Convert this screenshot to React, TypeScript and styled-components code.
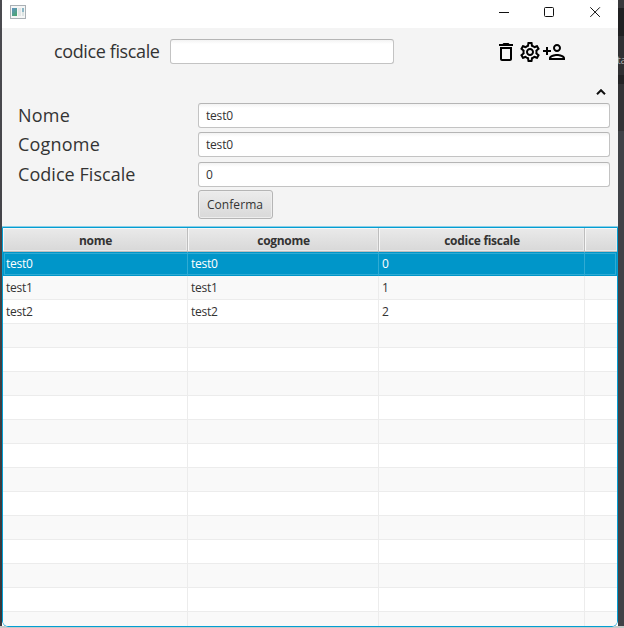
import React from "react";
import styled, { createGlobalStyle, css } from "styled-components";

const GlobalStyle = createGlobalStyle`
  * { box-sizing: border-box; }
  html, body { margin: 0; overflow: hidden; }
  body { font-family: "Open Sans", "Noto Sans", sans-serif; color: #333; }
`;

const Desktop = styled.div`
  width: 624px;
  height: 628px;
  padding: 0 6px 1px 2px;
  overflow: hidden;
  background:
    linear-gradient(#c9c9c9, #c9c9c9) 0 626px / 624px 2px no-repeat,
    linear-gradient(#4b4b50, #37373b) 0 0 / 2px 626px no-repeat,
    linear-gradient(#38383b 0 8px, #202022 8px 36px, #303033 36px 75px, #232325 75px 84px, #333336 84px 131px, #404247 131px) 618px 0 / 6px 626px no-repeat;
  position: relative;
`;

const BackgroundText = styled.span`
  position: absolute;
  left: 617px;
  top: 53px;
  font-size: 11px;
  line-height: 14px;
  letter-spacing: -0.5px;
  color: #aaa;
`;

const Window = styled.main`
  position: relative;
  display: flex;
  flex-direction: column;
  width: 616px;
  height: 627px;
  overflow: hidden;
  border-radius: 7px 7px 6px 6px;
  background: #f4f4f4;
`;

const TitleBar = styled.header`
  display: flex;
  flex: none;
  justify-content: space-between;
  height: 28px;
  padding-left: 8px;
  background: #fff;
  svg { display: block; }
`;

const SearchBar = styled.section`
  display: flex;
  align-items: flex-start;
  flex: none;
  height: 48px;
  padding: 11px 52px 0;
`;

const Label = styled.label<{ $width: number; $spacing: number }>`
  flex: none;
  width: ${(p) => p.$width}px;
  font-size: 18px;
  line-height: 24px;
  letter-spacing: ${(p) => p.$spacing}px;
  white-space: nowrap;
`;

const Field = styled.input<{ $width: number }>`
  width: ${(p) => p.$width}px;
  height: 25px;
  padding: 0 7px;
  border: 1px solid #c3c3c3;
  border-top-color: #b5b5b5;
  border-radius: 3px;
  outline: none;
  background: linear-gradient(#f3f3f3, #fff 4px);
  color: #333;
  font: 12px "Open Sans", "Noto Sans", sans-serif;
  letter-spacing: -0.2px;
`;

const Actions = styled.div`
  display: flex;
  margin: 1px 0 0 100px;
  svg { display: block; fill: #000; }
`;

const CollapseRow = styled.div`
  display: flex;
  flex: none;
  justify-content: flex-end;
  height: 27px;
  padding: 12px 12px 0 0;
`;

const Form = styled.form`
  display: flex;
  flex: none;
  flex-direction: column;
  height: 123px;
  padding-left: 16px;
`;

const FormRow = styled.div<{ $height: number }>`
  display: flex;
  align-items: flex-start;
  height: ${(p) => p.$height}px;
`;

const ConfirmButton = styled.button`
  width: 75px;
  height: 29px;
  margin-left: 180px;
  padding: 0 1px 0 0;
  border: 1px solid #b5b5b5;
  border-radius: 3px;
  background: linear-gradient(#ececec, #d9d9d9);
  box-shadow: inset 0 0 0 1px #eee;
  color: #333;
  font: 12px "Open Sans", "Noto Sans", sans-serif;
  letter-spacing: 0.08px;
`;

const Table = styled.div`
  flex: 1;
  min-height: 0;
  overflow: hidden;
  border: 1px solid #039ed3;
  border-radius: 0 0 6px 6px;
  box-shadow: 0 -1px 0 #8bcfe6;
  background: #fff;
  margin-top: 1px;
`;

const columns = css`
  display: grid;
  grid-template-columns: 185px 191px 206px 32px;
`;

const HeaderRow = styled.div`
  ${columns}
  height: 24px;
`;

const HeaderCell = styled.div`
  display: flex;
  align-items: center;
  justify-content: center;
  padding: 2px 0 0 1px;
  border-right: 1px solid #bdbdbd;
  border-bottom: 1px solid #bdbdbd;
  background: linear-gradient(#eaeaea, #d8d8d8);
  box-shadow: inset 1px 1px 0 #f7f7f7, inset -1px -1px 0 #e9e9e9;
  font-size: 12px;
  line-height: 16px;
  font-weight: 700;
  letter-spacing: -0.3px;
  &:last-child { border-right: 0; }
`;

const Row = styled.div<{ $selected: boolean; $odd: boolean }>`
  ${columns}
  height: 24px;
  background: ${(p) => (p.$selected ? "#0096c9" : p.$odd ? "#f9f9f9" : "#fff")};
  color: ${(p) => (p.$selected ? "#fff" : "#333")};
  ${(p) => p.$selected && css`box-shadow: inset 0 0 0 1px #0096c9, inset 0 0 0 2px #2fabd4;`}
`;

const Cell = styled.div<{ $selected: boolean }>`
  padding: 0 3px;
  border-right: 1px solid ${(p) => (p.$selected ? "#2fabd4" : "#ececec")};
  border-bottom: 1px solid ${(p) => (p.$selected ? "transparent" : "#ececec")};
  font-size: 12px;
  line-height: 23px;
  letter-spacing: -0.25px;
  &:last-child { border-right: 0; }
`;

const people = [
  ["test0", "test0", "0"],
  ["test1", "test1", "1"],
  ["test2", "test2", "2"],
];
const rows = Array.from({ length: 16 }, (_, i) => [...(people[i] ?? ["", "", ""]), ""]);

const AppIcon = () => (
  <svg width="16" height="28" viewBox="0 0 16 28">
    <defs>
      <linearGradient id="pane" x2="0.6" y2="1">
        <stop stopColor="#6292c4" />
        <stop offset="1" stopColor="#4ba476" />
      </linearGradient>
    </defs>
    <path fill="#aab0b5" d="M0 5h16v14H0z" />
    <path fill="#f5f6f6" d="M1 6h14v12H1z" />
    <path fill="url(#pane)" d="M2 8h5v8H2z" />
    <path fill="#e3e6e6" d="M8 8h3v8H8z" />
    <path fill="#8db8c6" d="M12 8h2v4h-2z" />
    <path fill="#dce4e3" d="M12 12h2v4h-2z" />
  </svg>
);

const WindowControls = () => (
  <svg width="126" height="28" viewBox="0 0 126 28" fill="none" stroke="#111">
    <path d="M7 12.5h10" />
    <rect x="52.5" y="7.5" width="9" height="9" rx="1" />
    <path d="m98.3 7.3 9.6 9.6m0-9.6-9.6 9.6" />
  </svg>
);

const iconPaths = [
  "M6 19c0 1.1.9 2 2 2h8c1.1 0 2-.9 2-2V7H6v12zM8 9h8v10H8V9zm7.5-5-1-1h-5l-1 1H5v2h14V4h-3.5z",
  "M19.43 12.98c.04-.32.07-.64.07-.98 0-.34-.03-.66-.07-.98l2.11-1.65c.19-.15.24-.42.12-.64l-2-3.46c-.09-.16-.26-.25-.44-.25-.06 0-.12.01-.17.03l-2.49 1c-.52-.4-1.08-.73-1.69-.98l-.38-2.65C14.46 2.18 14.25 2 14 2h-4c-.25 0-.46.18-.49.42l-.38 2.65c-.61.25-1.17.59-1.69.98l-2.49-1c-.06-.02-.12-.03-.18-.03-.17 0-.34.09-.43.25l-2 3.46c-.13.22-.07.49.12.64l2.11 1.65c-.04.32-.07.65-.07.98 0 .33.03.66.07.98l-2.11 1.65c-.19.15-.24.42-.12.64l2 3.46c.09.16.26.25.44.25.06 0 .12-.01.17-.03l2.49-1c.52.4 1.08.73 1.69.98l.38 2.65c.03.24.24.42.49.42h4c.25 0 .46-.18.49-.42l.38-2.65c.61-.25 1.17-.59 1.69-.98l2.49 1c.06.02.12.03.18.03.17 0 .34-.09.43-.25l2-3.46c.12-.22.07-.49-.12-.64l-2.11-1.65zm-1.98-1.71c.04.31.05.52.05.73 0 .21-.02.43-.05.73l-.14 1.13.89.7 1.08.84-.7 1.21-1.27-.51-1.04-.42-.9.68c-.43.32-.84.56-1.25.73l-1.06.43-.16 1.13-.2 1.35h-1.4l-.19-1.35-.16-1.13-1.06-.43c-.43-.18-.83-.41-1.23-.71l-.91-.7-1.06.43-1.27.51-.7-1.21 1.08-.84.89-.7-.14-1.13c-.03-.31-.05-.54-.05-.74s.02-.43.05-.73l.14-1.13-.89-.7-1.08-.84.7-1.21 1.27.51 1.04.42.9-.68c.43-.32.84-.56 1.25-.73l1.06-.43.16-1.13.2-1.35h1.39l.19 1.35.16 1.13 1.06.43c.43.18.83.41 1.23.71l.91.7 1.06-.43 1.27-.51.7 1.21-1.07.85-.89.7.14 1.13zM12 8c-2.21 0-4 1.79-4 4s1.79 4 4 4 4-1.79 4-4-1.79-4-4-4zm0 6c-1.1 0-2-.9-2-2s.9-2 2-2 2 .9 2 2-.9 2-2 2z",
  "M15 12c2.21 0 4-1.79 4-4s-1.79-4-4-4-4 1.79-4 4 1.79 4 4 4zm0-6c1.1 0 2 .9 2 2s-.9 2-2 2-2-.9-2-2 .9-2 2-2zm0 8c-2.67 0-8 1.34-8 4v2h16v-2c0-2.66-5.33-4-8-4zm-6 4c.22-.72 3.31-2 6-2 2.7 0 5.8 1.29 6 2H9zm-3-3v-3h3v-2H6V7H4v3H1v2h3v3z",
];

export default function App() {
  return (
    <Desktop>
      <GlobalStyle />
      <BackgroundText>ta</BackgroundText>
      <Window>
        <TitleBar>
          <AppIcon />
          <WindowControls />
        </TitleBar>
        <SearchBar>
          <Label $width={116} $spacing={-0.38}>codice fiscale</Label>
          <Field $width={224} />
          <Actions>
            {iconPaths.map((d) => (
              <svg key={d} width="24" height="24" viewBox="0 0 24 24"><path d={d} /></svg>
            ))}
          </Actions>
        </SearchBar>
        <CollapseRow>
          <svg width="10" height="8" viewBox="0 0 10 8" fill="none" stroke="#111" strokeWidth="2">
            <path d="m1 6.2 4-4 4 4" />
          </svg>
        </CollapseRow>
        <Form>
          <FormRow $height={29}>
            <Label $width={180} $spacing={0.2}>Nome</Label>
            <Field $width={412} defaultValue="test0" />
          </FormRow>
          <FormRow $height={30}>
            <Label $width={180} $spacing={0.2}>Cognome</Label>
            <Field $width={412} defaultValue="test0" />
          </FormRow>
          <FormRow $height={28}>
            <Label $width={180} $spacing={0.05}>Codice Fiscale</Label>
            <Field $width={412} defaultValue="0" />
          </FormRow>
          <ConfirmButton type="button">Conferma</ConfirmButton>
        </Form>
        <Table>
          <HeaderRow>
            {["nome", "cognome", "codice fiscale", ""].map((name) => (
              <HeaderCell key={name}>{name}</HeaderCell>
            ))}
          </HeaderRow>
          {rows.map((row, r) => (
            <Row key={r} $selected={r === 0} $odd={r % 2 === 1}>
              {row.map((value, c) => (
                <Cell key={c} $selected={r === 0}>{value}</Cell>
              ))}
            </Row>
          ))}
        </Table>
      </Window>
    </Desktop>
  );
}
